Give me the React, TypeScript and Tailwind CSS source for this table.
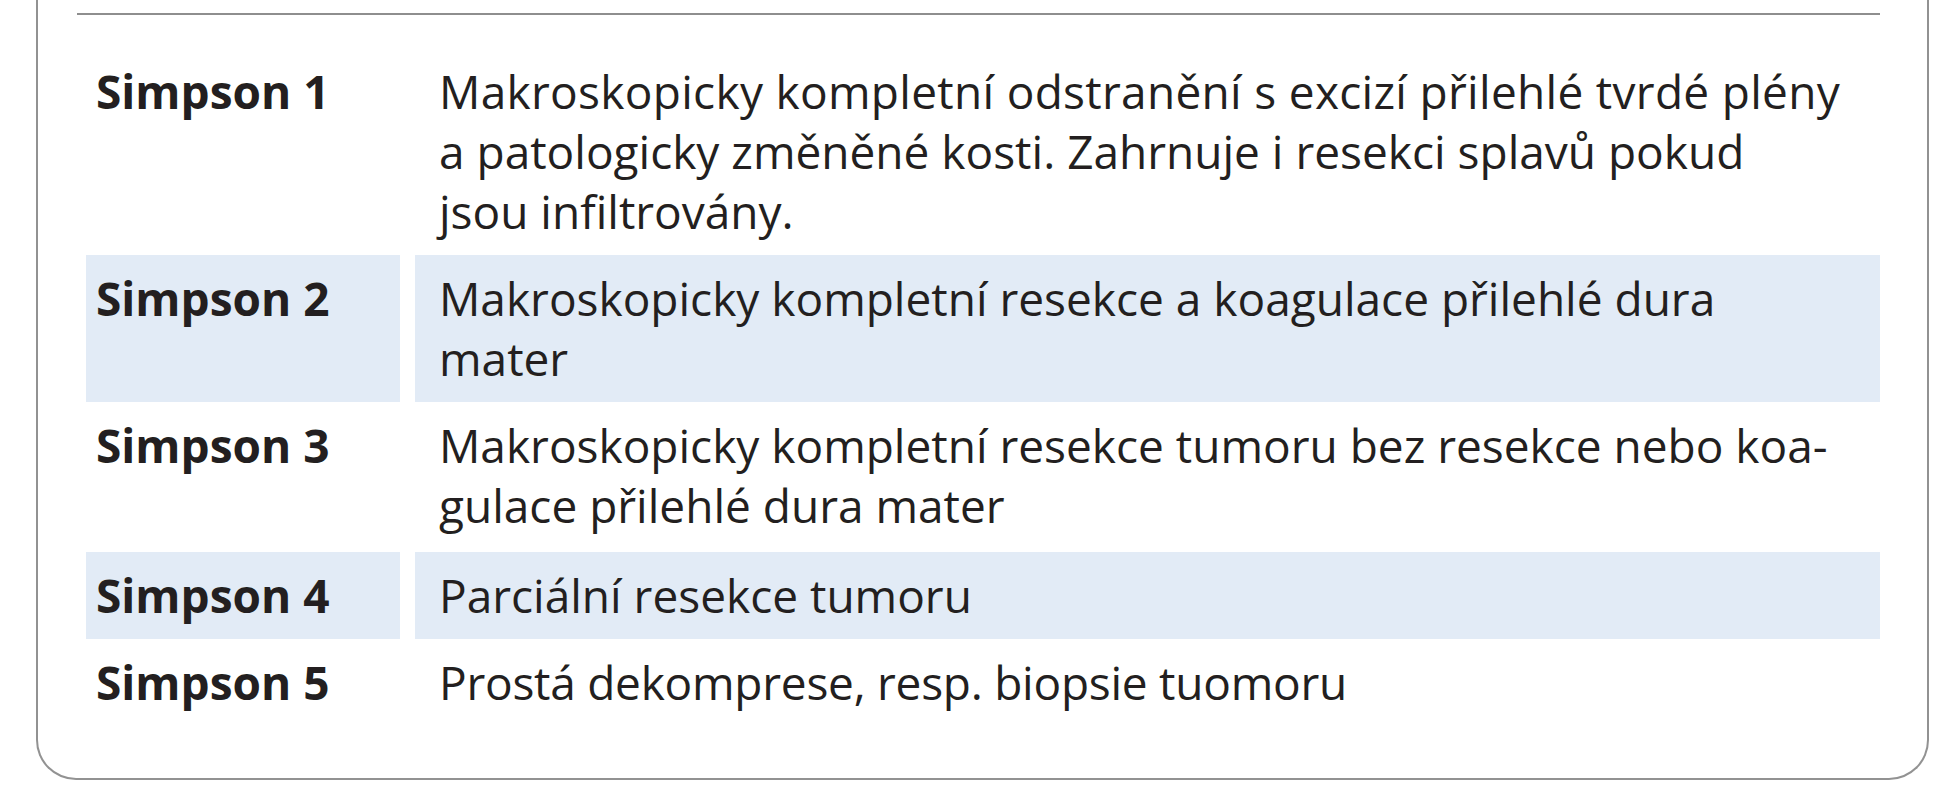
import React from "react";

type Line = { text: string; track?: string };
type Row = { label: string; lines: Line[]; shaded: boolean; pb: string };

const rows: Row[] = [
  {
    label: "Simpson 1",
    lines: [
      { text: "Makroskopicky kompletní odstranění s excizí přilehlé tvrdé plény", track: "tracking-[0.3px]" },
      { text: "a patologicky změněné kosti. Zahrnuje i resekci splavů pokud" },
      { text: "jsou infiltrovány." },
    ],
    shaded: false,
    pb: "pb-[14px]",
  },
  {
    label: "Simpson 2",
    lines: [{ text: "Makroskopicky kompletní resekce a koagulace přilehlé dura" }, { text: "mater" }],
    shaded: true,
    pb: "pb-[14px]",
  },
  {
    label: "Simpson 3",
    lines: [
      { text: "Makroskopicky kompletní resekce tumoru bez resekce nebo koa-" },
      { text: "gulace přilehlé dura mater" },
    ],
    shaded: false,
    pb: "pb-[17px]",
  },
  { label: "Simpson 4", lines: [{ text: "Parciální resekce tumoru" }], shaded: true, pb: "pb-[14px]" },
  {
    label: "Simpson 5",
    lines: [{ text: "Prostá dekomprese, resp. biopsie tuomoru", track: "tracking-[-0.25px]" }],
    shaded: false,
    pb: "pb-[14px]",
  },
];

export default function App() {
  return (
    <div
      className="w-[1955px] h-[800px] bg-white overflow-hidden text-[#231f20]"
      style={{ fontFamily: '"Open Sans", "Noto Sans", sans-serif' }}
    >
      <div className="ml-[36px] w-[1893px] h-[780px] border-2 border-t-0 border-[#929292] rounded-b-[40px] flex flex-col">
        <div className="ml-[39px] mr-[47px] mt-[13px] h-[2px] bg-[#8e8e8e]" />
        <div className="mt-[33px] ml-[48px] mr-[47px] grid grid-cols-[314px_1fr] gap-x-[15px]">
          {rows.map((r) => (
            <React.Fragment key={r.label}>
              <div
                className={`pl-[10px] pt-[13px] ${r.pb} text-[46px] leading-[60px] font-bold ${
                  r.shaded ? "bg-[#e2ebf6]" : ""
                }`}
              >
                {r.label}
              </div>
              <div
                className={`pl-[24px] pt-[13px] ${r.pb} text-[46px] leading-[60px] ${
                  r.shaded ? "bg-[#e2ebf6]" : ""
                }`}
              >
                {r.lines.map((l, i) => (
                  <div key={i} className={`whitespace-nowrap ${l.track ?? ""}`}>
                    {l.text}
                  </div>
                ))}
              </div>
            </React.Fragment>
          ))}
        </div>
      </div>
    </div>
  );
}
